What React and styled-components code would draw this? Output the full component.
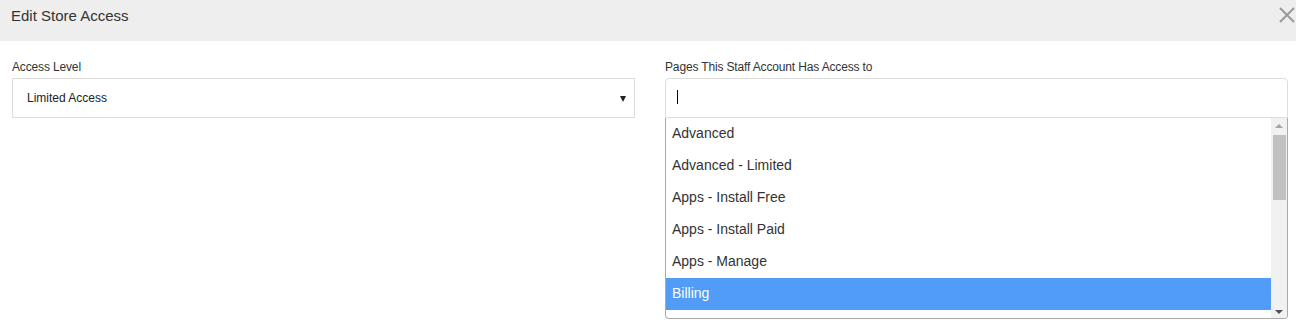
import React from "react";
import styled, { createGlobalStyle, css } from "styled-components";

const pages = [
  "Advanced",
  "Advanced - Limited",
  "Apps - Install Free",
  "Apps - Install Paid",
  "Apps - Manage",
  "Billing",
];

export default function App() {
  return (
    <>
      <GlobalStyles />
      <Modal>
        <Header>
          <Title>Edit Store Access</Title>
          <CloseButton aria-label="Close">
            <svg width="16" height="16" viewBox="0 0 16 16">
              <path d="M1 1 L15 15 M15 1 L1 15" stroke="#9a9a9a" strokeWidth="2" />
            </svg>
          </CloseButton>
        </Header>

        <Body>
          <Field>
            <Label>Access Level</Label>
            <SelectBox>
              <span>Limited Access</span>
              <Arrow />
            </SelectBox>
          </Field>

          <Field>
            <Label>Pages This Staff Account Has Access to</Label>
            <SearchInput>
              <Caret />
            </SearchInput>
            <Dropdown>
              <Options>
                {pages.map((p) => (
                  <Option key={p} $active={p === "Billing"}>
                    {p}
                  </Option>
                ))}
                <Option aria-hidden="true" />
              </Options>
              <Scrollbar>
                <ScrollButton>
                  <ScrollArrow $up />
                </ScrollButton>
                <Thumb />
                <Track />
                <ScrollButton>
                  <ScrollArrow />
                </ScrollButton>
              </Scrollbar>
            </Dropdown>
          </Field>
        </Body>
      </Modal>
    </>
  );
}

const GlobalStyles = createGlobalStyle`
  * { box-sizing: border-box; }
  body {
    margin: 0;
    background: #fff;
    font-family: "Liberation Sans", Arial, sans-serif;
    color: #333;
  }
`;

const Modal = styled.div`
  width: 1296px;
  height: 327px;
  background: #fff;
`;

const Header = styled.div`
  height: 41px;
  background: #eeeeee;
  display: flex;
  justify-content: space-between;
  align-items: flex-start;
  padding: 6px 1px 0 11px;
`;

const Title = styled.h4`
  margin: 0;
  font-size: 15px;
  font-weight: normal;
  line-height: 20px;
  color: #333;
`;

const CloseButton = styled.button`
  border: 0;
  background: none;
  padding: 0;
  margin-top: 1px;
  width: 16px;
  height: 16px;
  display: flex;
  cursor: pointer;
`;

const Body = styled.div`
  display: grid;
  grid-template-columns: 1fr 1fr;
  column-gap: 30px;
  padding: 19px 8px 0 12px;
`;

const Field = styled.div`
  display: flex;
  flex-direction: column;
`;

const Label = styled.label`
  font-size: 12px;
  line-height: 14px;
  letter-spacing: -0.15px;
  color: #333;
  margin-bottom: 4px;
`;

const SelectBox = styled.div`
  height: 40px;
  border: 1px solid #ddd;
  display: flex;
  align-items: center;
  justify-content: space-between;
  padding: 0 8px 0 14px;
  font-size: 12px;
  color: #222;
`;

const Arrow = styled.span`
  width: 0;
  height: 0;
  border-left: 3.5px solid transparent;
  border-right: 3.5px solid transparent;
  border-top: 6px solid #222;
  margin-top: 2px;
`;

const SearchInput = styled.div`
  height: 40px;
  border: 1px solid #ddd;
  border-radius: 4px 4px 0 0;
  display: flex;
  align-items: center;
  padding-left: 11px;
`;

const Caret = styled.span`
  width: 1px;
  height: 14px;
  background: #000;
  margin-top: -2px;
`;

const Dropdown = styled.div`
  height: 201px;
  border: 1px solid #aaa;
  border-top: none;
  border-radius: 0 0 4px 4px;
  display: flex;
  overflow: hidden;
`;

const Options = styled.ul`
  flex: 1;
  margin: 0;
  padding: 0;
  list-style: none;
  overflow: hidden;
`;

const Option = styled.li`
  height: 32px;
  padding: 5px 6px 7px;
  font-size: 14px;
  line-height: 20px;
  color: #333;
  white-space: nowrap;
  ${(p) =>
    p.$active &&
    css`
      background: #519cf6;
      color: #fff;
    `}
`;

const Scrollbar = styled.div`
  width: 16px;
  background: #f1f1f1;
  display: flex;
  flex-direction: column;
`;

const ScrollButton = styled.div`
  height: 17px;
  display: flex;
  align-items: center;
  justify-content: center;
`;

const ScrollArrow = styled.span`
  width: 0;
  height: 0;
  border-left: 4px solid transparent;
  border-right: 4px solid transparent;
  ${(p) =>
    p.$up
      ? css`
          border-bottom: 4px solid #a3a3a3;
          margin-bottom: 1px;
        `
      : css`
          border-top: 4px solid #505050;
          margin-top: 4px;
        `}
`;

const Thumb = styled.div`
  height: 65px;
  margin: 0 1px 0 2px;
  background: #c1c1c1;
`;

const Track = styled.div`
  flex: 1;
`;
